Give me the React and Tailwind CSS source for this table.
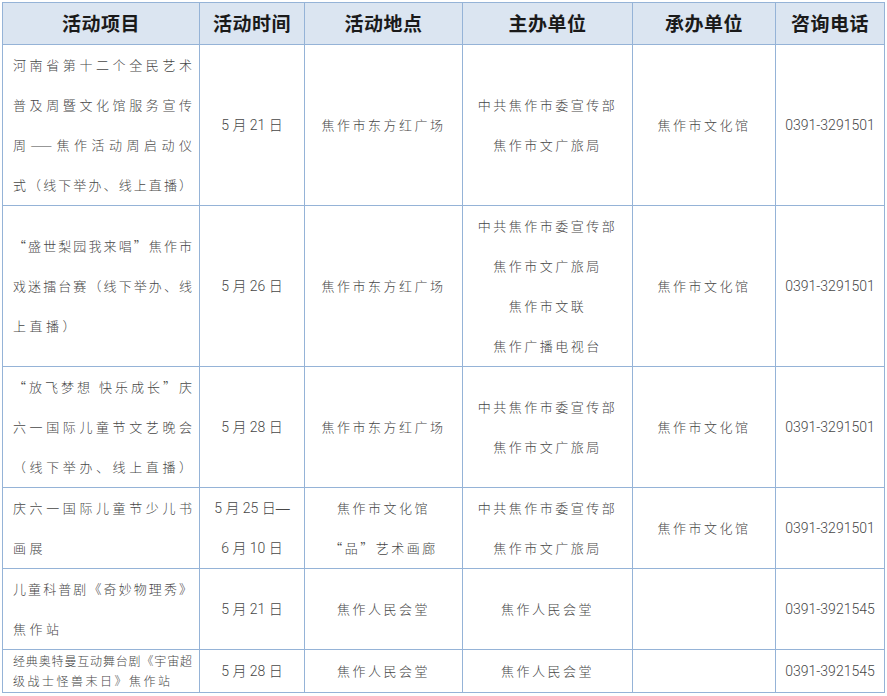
const cjk = { fontFamily: '"Noto Sans CJK SC", "Liberation Sans", sans-serif' };

const rows = [
  {
    name: [['河南省第十二个全民艺术', 1], ['普及周暨文化馆服务宣传', 1], ['周——焦作活动周启动仪', 1], ['式（线下举办、线上直播）', 1]],
    date: ['5 月 21 日'],
    place: ['焦作市东方红广场'],
    host: ['中共焦作市委宣传部', '焦作市文广旅局'],
    org: '焦作市文化馆',
    phone: '0391-3291501',
  },
  {
    name: [['“盛世梨园我来唱”焦作市', 1], ['戏迷擂台赛（线下举办、线', 1], ['上直播）', 0]],
    date: ['5 月 26 日'],
    place: ['焦作市东方红广场'],
    host: ['中共焦作市委宣传部', '焦作市文广旅局', '焦作市文联', '焦作广播电视台'],
    org: '焦作市文化馆',
    phone: '0391-3291501',
  },
  {
    name: [['“放飞梦想 快乐成长”庆', 1], ['六一国际儿童节文艺晚会', 1], ['（线下举办、线上直播）', 1]],
    date: ['5 月 28 日'],
    place: ['焦作市东方红广场'],
    host: ['中共焦作市委宣传部', '焦作市文广旅局'],
    org: '焦作市文化馆',
    phone: '0391-3291501',
  },
  {
    name: [['庆六一国际儿童节少儿书', 1], ['画展', 0]],
    date: [<>5 月 25 日<span className="font-['Liberation_Sans',sans-serif]">—</span></>, '6 月 10 日'],
    place: ['焦作市文化馆', '“品”艺术画廊'],
    host: ['中共焦作市委宣传部', '焦作市文广旅局'],
    org: '焦作市文化馆',
    phone: '0391-3291501',
  },
  {
    name: [['儿童科普剧《奇妙物理秀》', 1], ['焦作站', 0]],
    date: ['5 月 21 日'],
    place: ['焦作人民会堂'],
    host: ['焦作人民会堂'],
    org: '',
    phone: '0391-3921545',
  },
];

const headers = ['活动项目', '活动时间', '活动地点', '主办单位', '承办单位', '咨询电话'];

function NameLines({ items }) {
  return items.map(([t, full], i) =>
    full ? (
      <div key={i} className="text-justify [text-align-last:justify] tracking-normal">{t}</div>
    ) : (
      <div key={i} className="tracking-[3.5px]">{t}</div>
    )
  );
}

function Lines({ items }) {
  return items.map((t, i) => <div key={i}>{t}</div>);
}

export default function App() {
  const cell = 'border border-[#95b3d7] align-middle text-[#474747]';
  const num = "text-center text-[14px] font-light font-['Roboto','Noto_Sans_CJK_SC',sans-serif]";
  return (
    <div className="w-[887px] h-[696px] bg-white pt-[2px] pl-[2px]">
      <table className="table-fixed border-collapse w-[882px]" style={cjk}>
        <colgroup>
          <col className="w-[197px]" />
          <col className="w-[105px]" />
          <col className="w-[158px]" />
          <col className="w-[170px]" />
          <col className="w-[143px]" />
          <col className="w-[109px]" />
        </colgroup>
        <thead>
          <tr className="h-[42px] bg-[#dbe5f1]">
            {headers.map((h) => (
              <th key={h} className="border border-[#95b3d7] text-center text-[19px] font-bold text-[#1a1a1a] tracking-[0.5px]">
                {h}
              </th>
            ))}
          </tr>
        </thead>
        <tbody className="text-[13px] leading-[40px] font-light">
          {rows.map((r, i) => (
            <tr key={i}>
              <td className={`${cell} pl-[10px] pr-[7px] whitespace-nowrap`}>
                <NameLines items={r.name} />
              </td>
              <td className={`${cell} ${num} whitespace-nowrap`}>
                <Lines items={r.date} />
              </td>
              <td className={`${cell} text-center tracking-[2.5px]`}>
                <Lines items={r.place} />
              </td>
              <td className={`${cell} text-center tracking-[2.5px]`}>
                <Lines items={r.host} />
              </td>
              <td className={`${cell} text-center tracking-[2.5px]`}>{r.org}</td>
              <td className={`${cell} ${num}`}>{r.phone}</td>
            </tr>
          ))}
          <tr className="leading-[20px]">
            <td className={`${cell} pl-[10px] pr-[7px] py-[1px] text-[12px] whitespace-nowrap`}>
              <div className="text-justify [text-align-last:justify]">经典奥特曼互动舞台剧《宇宙超</div>
              <div className="tracking-[2.5px]">级战士怪兽末日》焦作站</div>
            </td>
            <td className={`${cell} ${num}`}>5 月 28 日</td>
            <td className={`${cell} text-center tracking-[2.5px]`}>焦作人民会堂</td>
            <td className={`${cell} text-center tracking-[2.5px]`}>焦作人民会堂</td>
            <td className={cell}></td>
            <td className={`${cell} ${num}`}>0391-3921545</td>
          </tr>
        </tbody>
      </table>
    </div>
  );
}
